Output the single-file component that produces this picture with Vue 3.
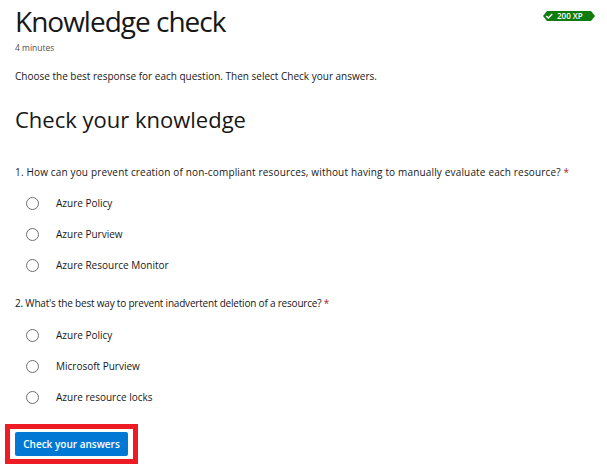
<script setup>
const questions = [
  {
    text: '1. How can you prevent creation of non-compliant resources, without having to manually evaluate each resource?',
    options: ['Azure Policy', 'Azure Purview', 'Azure Resource Monitor'],
  },
  {
    text: "2. What's the best way to prevent inadvertent deletion of a resource?",
    options: ['Azure Policy', 'Microsoft Purview', 'Azure resource locks'],
  },
]
</script>

<template>
  <div class="page">
    <div class="top">
      <h1>Knowledge check</h1>
      <div class="badge">
        <svg width="52" height="12" viewBox="0 0 52 12">
          <path d="M0 6 L4 1 H48 L52 6 L48 11 H4 Z" fill="#107c10" />
          <path d="M3.2 6 L5.4 8 L9.2 4" fill="none" stroke="#fff" stroke-width="1.4" />
        </svg>
        <span>200 XP</span>
      </div>
    </div>
    <div class="time">4 minutes</div>
    <p class="intro">Choose the best response for each question. Then select Check your answers.</p>
    <h2>Check your knowledge</h2>
    <div v-for="q in questions" :key="q.text" class="question">
      <div class="qtext">{{ q.text }} <span class="req">*</span></div>
      <label v-for="o in q.options" :key="o" class="option">
        <span class="radio"></span>
        <span class="otext">{{ o }}</span>
      </label>
    </div>
    <div class="highlight">
      <button>Check your answers</button>
    </div>
  </div>
</template>

<style scoped>
.page {
  width: 607px;
  height: 470px;
  box-sizing: border-box;
  padding: 0 0 0 15px;
  font-family: "Open Sans", "Noto Sans", sans-serif;
  color: #171717;
  background: #fff;
  overflow: hidden;
  font-size: 10px;
}
.top {
  display: flex;
  justify-content: space-between;
  align-items: flex-start;
  padding-right: 12px;
}
h1 {
  margin: 0;
  font-size: 28px;
  font-weight: 400;
  line-height: 42px;
  letter-spacing: -1px;
}
.badge {
  position: relative;
  margin-top: 10px;
  width: 52px;
  height: 12px;
}
.badge span {
  position: absolute;
  left: 14px;
  top: 0;
  line-height: 12px;
  font-size: 8px;
  font-weight: 600;
  color: #fff;
}
.time {
  font-size: 8.5px;
  line-height: 12px;
  color: #505050;
}
.intro {
  margin: 15px 0 0;
  line-height: 14px;
}
h2 {
  margin: 20px 0 0;
  font-size: 22px;
  font-weight: 500;
  line-height: 32px;
}
.question {
  margin-top: 30px;
}
.question + .question {
  margin-top: 15px;
}
.qtext {
  line-height: 14px;
  margin-bottom: 9px;
  font-weight: 500;
  letter-spacing: 0.16px;
}
.question + .question .qtext {
  margin-bottom: 10px;
  letter-spacing: -0.2px;
}
.req {
  color: #a4262c;
}
.option {
  display: flex;
  align-items: center;
  gap: 17px;
  height: 31px;
  padding-left: 11px;
}
.radio {
  box-sizing: border-box;
  width: 13px;
  height: 13px;
  border: 1px solid #6e6e6e;
  border-radius: 50%;
}
.otext {
  line-height: 14px;
  padding-bottom: 1px;
}
.highlight {
  display: inline-block;
  margin: 11px 0 0 -10px;
  padding: 3px 5px;
  border: 5px solid #ed1c24;
}
button {
  display: block;
  width: 113px;
  height: 24px;
  padding: 0;
  border: 0;
  border-radius: 2px;
  background: #0078d4;
  color: #fff;
  font: 600 10px "Open Sans", "Noto Sans", sans-serif;
}
</style>
